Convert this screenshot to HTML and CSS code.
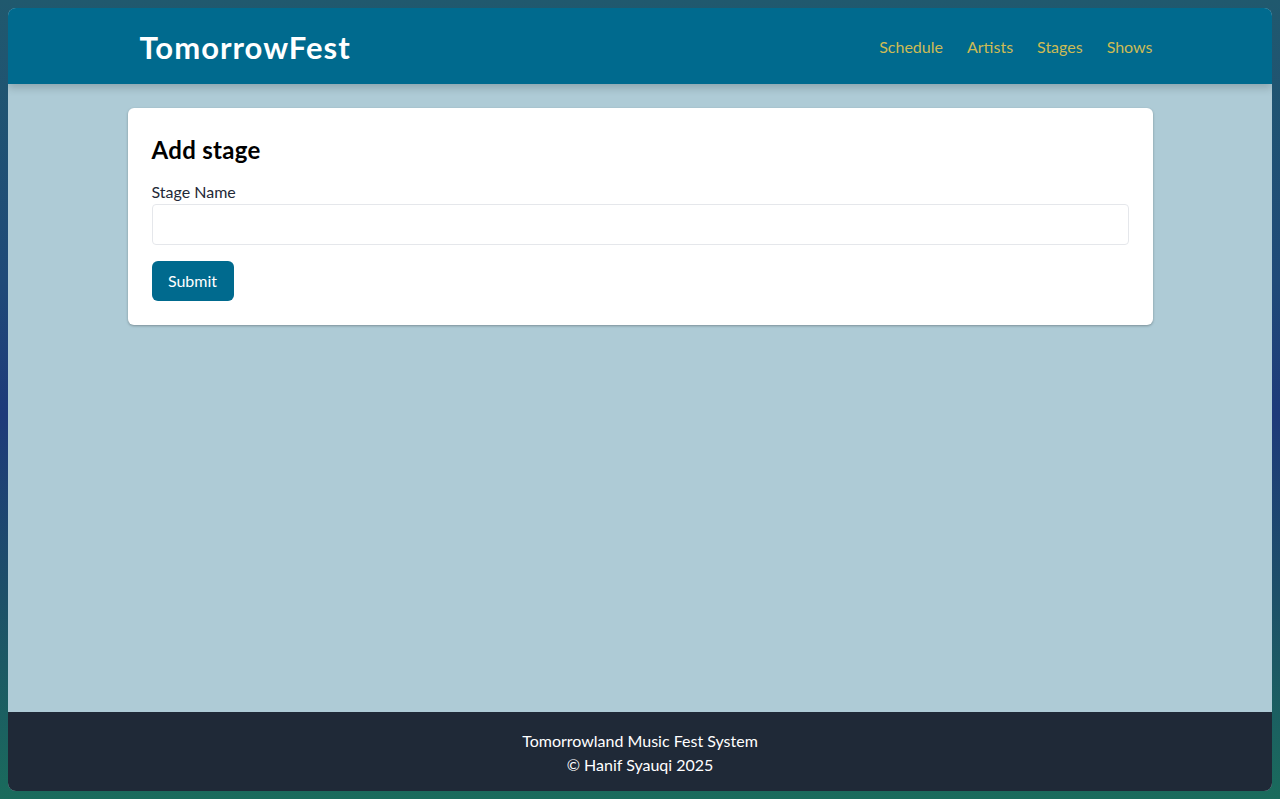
FILE: index.html
```html
<!DOCTYPE html>
<html lang="en">
<head>
<meta charset="utf-8">
<title>TomorrowFest</title>
<link rel="stylesheet" href="styles.css">
</head>
<body>
<div class="window">
  <header class="topbar">
    <div class="container topbar-inner">
      <a class="logo" href="#">TomorrowFest</a>
      <nav class="nav">
        <a href="#">Schedule</a>
        <a href="#">Artists</a>
        <a href="#">Stages</a>
        <a href="#">Shows</a>
      </nav>
    </div>
  </header>
  <main class="main">
    <div class="container">
      <section class="card">
        <h1 class="card-title">Add stage</h1>
        <form class="form">
          <label class="label" for="stage">Stage Name</label>
          <input class="input" id="stage" type="text">
          <button class="btn" type="button">Submit</button>
        </form>
      </section>
    </div>
  </main>
  <footer class="footer">
    <p>Tomorrowland Music Fest System</p>
    <p>© Hanif Syauqi 2025</p>
  </footer>
</div>
</body>
</html>
```
FILE: styles.css
```css
* { box-sizing: border-box; }
html, body { height: 100%; }
body {
  margin: 0;
  padding: 8px;
  background: linear-gradient(180deg, #20596e 0%, #1f4a78 35%, #1e3a7a 52%, #1d5068 75%, #1a6b5c 100%);
  font-family: "Lato", "Noto Sans", sans-serif;
  font-size: 16px;
  line-height: 24px;
  color: #111827;
}
.window {
  height: 783px;
  border-radius: 8px;
  overflow: hidden;
  display: flex;
  flex-direction: column;
  background: #aecbd6;
}
.container {
  width: 1025px;
  margin: 0 auto;
}
.topbar {
  background: #006a8e;
  height: 76px;
  flex: 0 0 auto;
  box-shadow: 0 4px 8px rgba(0,0,0,0.18);
  position: relative;
  z-index: 1;
}
.topbar-inner {
  height: 100%;
  display: flex;
  align-items: center;
  justify-content: space-between;
  padding-left: 12px;
  padding-top: 2px;
}
.logo {
  color: #ffffff;
  font-weight: 700;
  font-size: 31px;
  text-decoration: none;
  letter-spacing: 1px;
}
.nav {
  display: flex;
  gap: 24px;
}
.nav a {
  color: #cdbb55;
  text-decoration: none;
  font-size: 16px;
}
.main {
  flex: 1 1 auto;
  padding-top: 24px;
}
.card {
  background: #ffffff;
  border-radius: 6px;
  padding: 26px 24px 24px;
  box-shadow: 0 1px 3px rgba(0,0,0,0.2), 0 1px 2px rgba(0,0,0,0.1);
}
.card-title {
  margin: 0 0 14px;
  font-size: 24px;
  line-height: 32px;
  font-weight: 700;
  color: #000;
  letter-spacing: 0.3px;
}
.form {
  display: flex;
  flex-direction: column;
  align-items: flex-start;
}
.label {
  color: #1f2937;
  display: block;
}
.input {
  width: 100%;
  height: 41px;
  border: 1px solid #e5e7eb;
  border-radius: 4px;
  margin-top: 0;
  margin-bottom: 16px;
  font: inherit;
  padding: 8px;
}
.btn {
  background: #006a8e;
  color: #fff;
  border: none;
  border-radius: 6px;
  height: 40px;
  width: 82px;
  padding: 0;
  font: inherit;
  cursor: pointer;
}
.footer {
  background: #1f2937;
  color: #ffffff;
  text-align: center;
  padding: 17px 0 14px;
  flex: 0 0 auto;
}
.footer p { margin: 0; }
```
